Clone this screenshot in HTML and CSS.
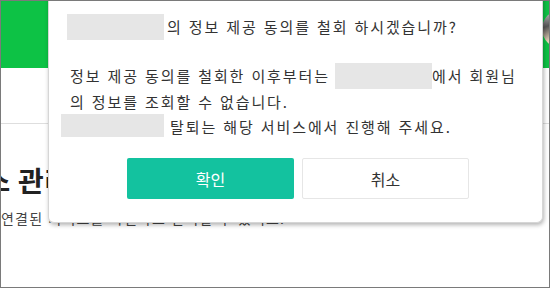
FILE: index.html
```html
<!DOCTYPE html>
<html lang="ko">
<head>
    <meta charset="utf-8">
    <title>정보 제공 동의 철회</title>
    <link rel="stylesheet" href="styles.css">
</head>
<body>
    <div class="page">
        <!-- page behind the dialog -->
        <div class="header">
            <span class="avatar"></span>
        </div>
        <div class="tabs"></div>
        <div class="content">
            <h1 class="title">서비스 관리</h1>
            <p class="subtitle">연결된 서비스를 확인하고 관리할 수 있어요.</p>
        </div>

        <!-- confirm dialog -->
        <div class="dialog">
            <p class="question"><span class="mask mask-first"></span>의 정보 제공 동의를 철회 하시겠습니까?</p>
            <p class="notice">정보 제공 동의를 철회한 이후부터는 <span class="mask mask-mid"></span>에서 회원님<br>의 정보를 조회할 수 없습니다.<br><span class="mask mask-last"></span> 탈퇴는 해당 서비스에서 진행해 주세요.</p>
            <div class="actions">
                <button class="btn btn-ok">확인</button>
                <button class="btn btn-cancel">취소</button>
            </div>
        </div>
    </div>
</body>
</html>
```

FILE: styles.css
```css
html, body {
    margin: 0;
    height: 100%;
}
body {
    font-family: "Noto Sans CJK KR", "Noto Sans", sans-serif;
    color: #333;
    background: #fff;
}
.page {
    position: relative;
    height: 100%;
    box-sizing: border-box;
    border: 1px solid #7a7a7a;
    overflow: hidden;
}
.header {
    height: 67px;
    background: #0dc245;
    display: flex;
    justify-content: flex-end;
    align-items: flex-start;
}
.avatar {
    width: 38px;
    height: 38px;
    margin-top: 9px;
    margin-right: -31px;
    border-radius: 50%;
    background: linear-gradient(160deg, #d8d8d8 0%, #555 35%, #e9d3b8 65%, #d7b995 100%);
}
.tabs {
    height: 55px;
    border-bottom: 1px solid #dedede;
}
.content {
    padding-top: 36px;
}
.title {
    margin: 0;
    font-size: 28px;
    font-weight: bold;
    line-height: 40px;
    color: #222;
    text-indent: -68px;
    white-space: nowrap;
}
.subtitle {
    margin: 8px 0 0;
    font-size: 14px;
    line-height: 20px;
    letter-spacing: 1.2px;
    color: #444;
    white-space: nowrap;
}
.dialog {
    position: absolute;
    left: 47px;
    right: 6px;
    top: -21px;
    padding: 34px 16px 23px 21px;
    background: #fff;
    border: 1px solid #d6d6d6;
    border-top: none;
    border-radius: 0 0 6px 6px;
    box-shadow: 1px 2px 4px rgba(0, 0, 0, 0.3);
}
.question, .notice {
    margin: 0;
    font-size: 15px;
    line-height: 25px;
    letter-spacing: 1.9px;
    color: #333;
}
.notice {
    margin-top: 23px;
}
.mask {
    display: inline-block;
    height: 26px;
    vertical-align: top;
    background: #e6e6e6;
}
.mask-first {
    width: 97px;
    margin-left: -3px;
    margin-right: 3px;
}
.mask-mid {
    width: 97px;
    margin-left: -1px;
}
.mask-last {
    width: 103px;
    margin-left: -9px;
    height: 23px;
}
.actions {
    display: flex;
    justify-content: center;
    gap: 8px;
    margin-top: 19px;
}
.btn {
    width: 167px;
    height: 41px;
    border-radius: 2px;
    font-family: inherit;
    font-size: 16px;
    cursor: pointer;
}
.btn-ok {
    border: none;
    background: #13c29f;
    color: #fff;
}
.btn-cancel {
    border: 1px solid #e6e6e6;
    background: #fff;
    color: #333;
}
```
